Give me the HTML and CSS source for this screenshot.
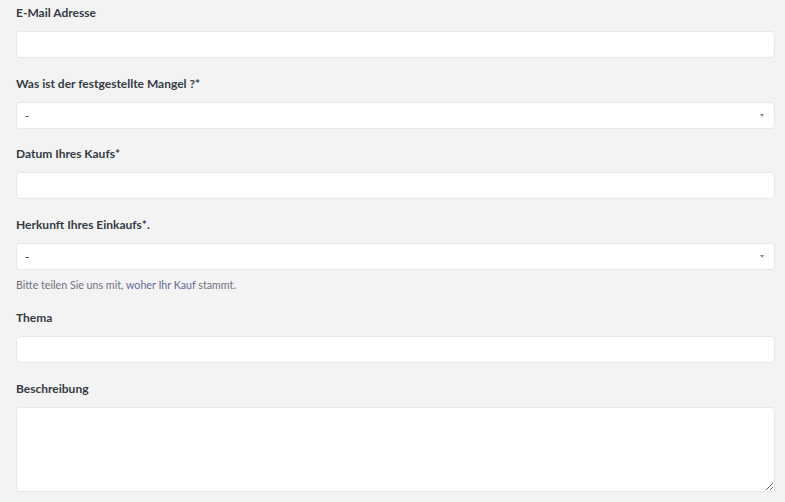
FILE: index.html
```html
<!DOCTYPE html>
<html lang="de">
<head>
    <meta charset="UTF-8">
    <meta name="viewport" content="width=device-width, initial-scale=1.0">
    <title>Anfrage einreichen</title>
    <link rel="stylesheet" href="styles.css">
</head>
<body>
    <!-- Formular -->
    <form class="request-form">
        <div class="form-field">
            <label class="field-label">E-Mail Adresse</label>
            <input class="field-input" type="text">
        </div>

        <div class="form-field">
            <label class="field-label">Was ist der festgestellte Mangel ?*</label>
            <div class="field-select">
                <span class="select-value">-</span>
                <span class="select-arrow"></span>
            </div>
        </div>

        <div class="form-field">
            <label class="field-label">Datum Ihres Kaufs*</label>
            <input class="field-input" type="text">
        </div>

        <div class="form-field">
            <label class="field-label">Herkunft Ihres Einkaufs*.</label>
            <div class="field-select">
                <span class="select-value">-</span>
                <span class="select-arrow"></span>
            </div>
            <p class="field-hint">Bitte teilen Sie uns mit, <span class="hint-link">woher Ihr Kauf</span> stammt.</p>
        </div>

        <div class="form-field">
            <label class="field-label">Thema</label>
            <input class="field-input" type="text">
        </div>

        <div class="form-field">
            <label class="field-label">Beschreibung</label>
            <textarea class="field-textarea"></textarea>
        </div>
    </form>
</body>
</html>
```

FILE: styles.css
```css
* {
    margin: 0;
    padding: 0;
    box-sizing: border-box;
}

body {
    background-color: #f3f3f3;
    font-family: Lato, "Liberation Sans", sans-serif;
    color: #2f3941;
    overflow: hidden;
}

.request-form {
    padding: 3px 10px 0 16px;
}

.form-field {
    display: flex;
    flex-direction: column;
    margin-bottom: 15.5px;
}

.field-label {
    font-size: 12px;
    font-weight: 700;
    line-height: 20px;
    margin-bottom: 8px;
    color: #333b44;
}

/* Eingabefelder */
.field-input,
.field-select,
.field-textarea {
    width: 759px;
    background-color: #fff;
    border: 1px solid #e8e8e8;
    border-radius: 4px;
    font-family: inherit;
    font-size: 13px;
    color: #2f3941;
    outline: none;
}

.field-input {
    height: 27px;
    padding: 0 8px;
}

.field-select {
    height: 27px;
    display: flex;
    align-items: center;
    justify-content: space-between;
    padding: 0 10px 0 8px;
}

.select-value {
    font-size: 12px;
}

/* kleiner Pfeil */
.select-arrow {
    width: 0;
    height: 0;
    border-left: 2.5px solid transparent;
    border-right: 2.5px solid transparent;
    border-top: 3px solid #8a8a8a;
    margin-top: 1px;
}

.field-textarea {
    height: 85px;
    padding: 6px 8px;
    resize: vertical;
}

.field-hint {
    font-size: 10.7px;
    line-height: 16px;
    color: #6f7280;
    margin-top: 7px;
}

.hint-link {
    color: #5f6b94;
}
```
